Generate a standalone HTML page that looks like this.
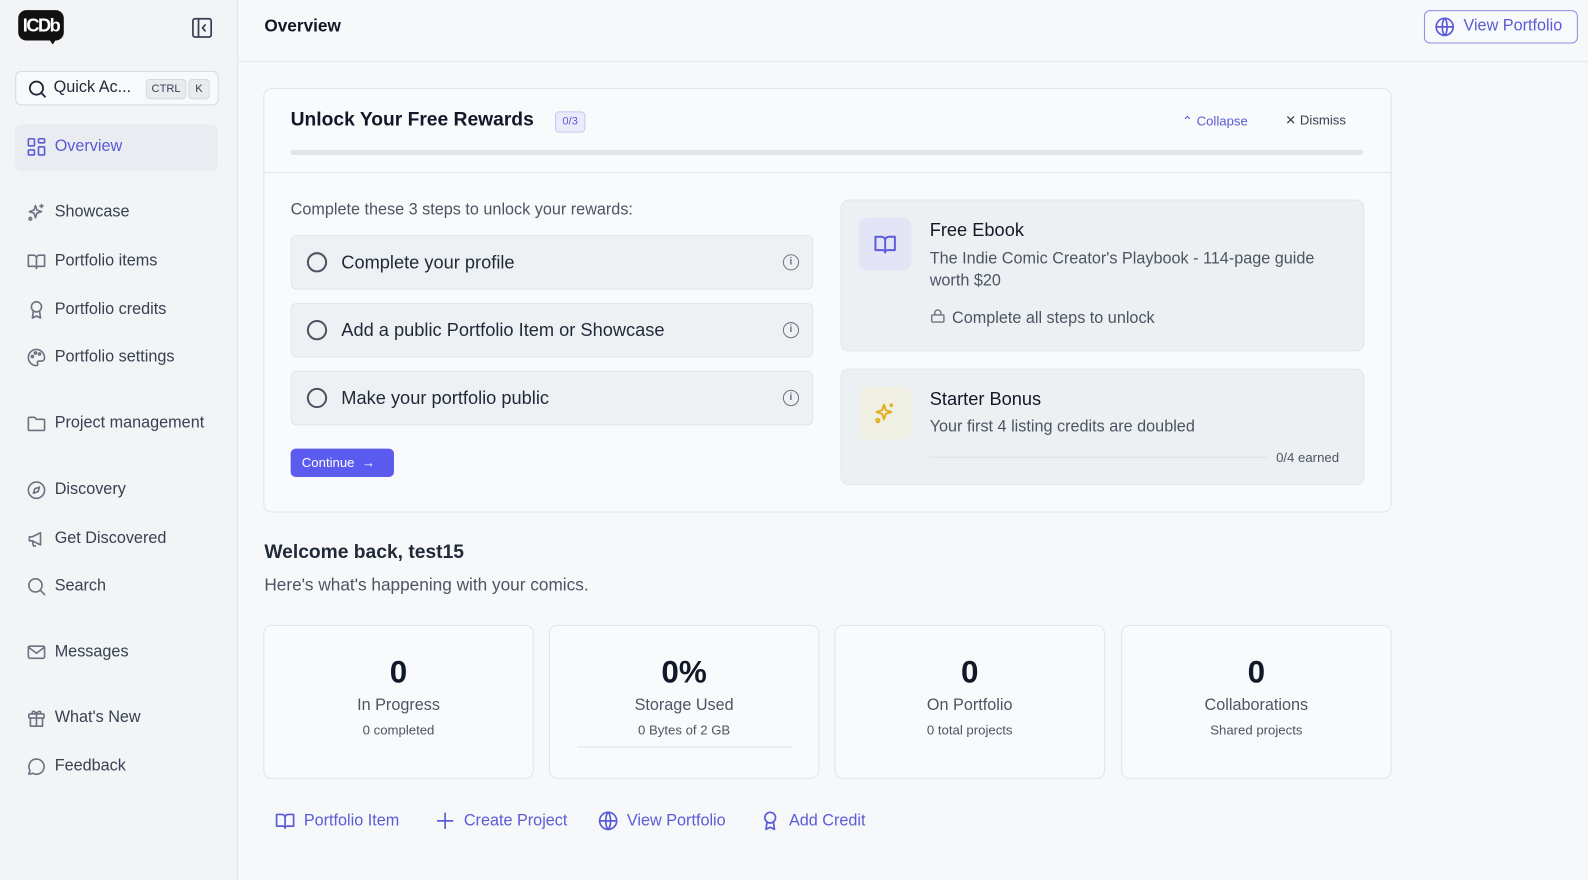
<!DOCTYPE html>
<html><head><meta charset="utf-8"><style>
*{box-sizing:border-box;margin:0;padding:0}
html,body{width:1588px;height:869px;overflow:hidden;background:#f6f8fa}
#w{position:absolute;left:0;top:0;width:1568px;height:858px;transform:scale(1.01276);transform-origin:0 0;font-family:"Liberation Sans",sans-serif;color:#1f2937}
.abs{position:absolute}
.side{left:0;top:0;width:235px;height:869px;border-right:1px solid #e3e6ea;background:#f2f4f6}
.nav{position:absolute;left:26px;display:flex;align-items:center;gap:8px;font-size:16px;color:#374151;height:20px}
.nav svg{width:20px;height:20px;fill:none;stroke:#6b7280;stroke-width:1.6;stroke-linecap:round;stroke-linejoin:round}
.main{left:235px;top:0;width:1400px;height:869px;background:#f6f8fa}
.step{position:absolute;left:287px;width:516px;height:54px;background:#eef1f4;border:1px solid #e1e5ea;border-radius:6px;display:flex;align-items:center;font-size:18px;color:#1f2937}
.step .c{width:20px;height:20px;border:2px solid #4b5563;border-radius:50%;margin:0 14px 0 15px}
.step .i{position:absolute;right:13px;top:18px;width:16px;height:16px;border:1.5px solid #6b7280;border-radius:50%;font-size:10px;text-align:center;line-height:13px;color:#6b7280;font-weight:bold}
.rc{position:absolute;left:830px;width:517px;background:#edf0f3;border:1px solid #e1e5ea;border-radius:8px}
.stat{position:absolute;top:617px;width:267px;height:152px;background:#f9fafb;border:1px solid #e1e5ea;border-radius:8px;text-align:center}
.stat .n{margin-top:28px;font-size:31px;font-weight:bold;color:#111827}
.stat .l{margin-top:6px;font-size:16px;color:#4b5563}
.stat .s{margin-top:7px;font-size:13px;color:#4b5563}
.lnk{position:absolute;top:800px;display:flex;align-items:center;gap:8px;color:#5b5bd6;font-size:16px}
.lnk svg{width:21px;height:21px;fill:none;stroke:#5b5bd6;stroke-width:1.6;stroke-linecap:round;stroke-linejoin:round}
</style></head><body><div id="w">
<div class="abs side"></div>
<div class="abs" style="left:18px;top:10px;width:45px;height:30px;background:#111;border-radius:8px;color:#fff;font-weight:bold;font-size:18px;line-height:30px;text-align:center;letter-spacing:-1.5px">ICDb</div>
<div class="abs" style="left:48px;top:38px;width:0;height:0;border-left:4px solid transparent;border-right:4px solid transparent;border-top:6px solid #111"></div>
<svg class="abs" style="left:189px;top:17px" width="21" height="21" viewBox="0 0 21 21" fill="none" stroke="#374151" stroke-width="1.7"><rect x="1.5" y="1.5" width="18" height="18" rx="2"/><path d="M7 1.5v18M14 7l-3 3.5 3 3.5"/></svg>
<div class="abs" style="left:15px;top:70px;width:201px;height:34px;border:1px solid #d5d9de;border-radius:6px;background:#f7f9fa"></div>
<svg class="abs" style="left:27px;top:78px" width="20" height="20" viewBox="0 0 20 20" fill="none" stroke="#1f2937" stroke-width="1.8"><circle cx="9" cy="9" r="6.5"/><path d="M14 14l4 4"/></svg>
<div class="abs" style="left:53px;top:78px;font-size:16px;color:#1f2937">Quick Ac...</div>
<div class="abs" style="left:144px;top:78px;width:40px;height:20px;border:1px solid #d5d9de;border-radius:4px;background:#e9ecef;font-size:11px;text-align:center;line-height:18px;color:#374151">CTRL</div>
<div class="abs" style="left:186px;top:78px;width:21px;height:20px;border:1px solid #d5d9de;border-radius:4px;background:#e9ecef;font-size:11px;text-align:center;line-height:18px;color:#374151">K</div>
<div class="abs" style="left:15px;top:123px;width:200px;height:46px;background:#e9ecf0;border-radius:6px"></div>
<div class="nav" style="top:135px;color:#5b5bd6"><svg viewBox="0 0 20 20" style="stroke:#5b5bd6"><rect x="2" y="2" width="6" height="7" rx="1"/><rect x="12" y="2" width="6" height="4" rx="1"/><rect x="12" y="10" width="6" height="8" rx="1"/><rect x="2" y="13" width="6" height="5" rx="1"/></svg>Overview</div>
<div class="nav" style="top:200px"><svg viewBox="0 0 20 20"><path d="M9 3l1.5 4.5L15 9l-4.5 1.5L9 15l-1.5-4.5L3 9l4.5-1.5z"/><path d="M15 2v3M13.5 3.5h3"/><circle cx="4" cy="16" r="1.3"/></svg>Showcase</div>
<div class="nav" style="top:248px"><svg viewBox="0 0 20 20"><path d="M2 4h5a3 3 0 013 3v10a2 2 0 00-2-2H2zM18 4h-5a3 3 0 00-3 3v10a2 2 0 012-2h6z"/></svg>Portfolio items</div>
<div class="nav" style="top:296px"><svg viewBox="0 0 20 20"><circle cx="10" cy="7" r="5"/><path d="M7 11l-1 7 4-2 4 2-1-7"/></svg>Portfolio credits</div>
<div class="nav" style="top:343px"><svg viewBox="0 0 20 20"><path d="M10 2a8 8 0 000 16c1.5 0 1.5-1.5 1-2.5s0-2 1.5-2H15a3 3 0 003-3c0-4.5-3.5-8.5-8-8.5z"/><circle cx="6" cy="9" r="1"/><circle cx="9" cy="5.5" r="1"/><circle cx="13" cy="6.5" r="1"/></svg>Portfolio settings</div>
<div class="nav" style="top:408px"><svg viewBox="0 0 20 20"><path d="M2 5a1 1 0 011-1h5l2 2h7a1 1 0 011 1v9a1 1 0 01-1 1H3a1 1 0 01-1-1z"/></svg>Project management</div>
<div class="nav" style="top:474px"><svg viewBox="0 0 20 20"><circle cx="10" cy="10" r="8"/><path d="M13 7l-1.5 4.5L7 13l1.5-4.5z"/></svg>Discovery</div>
<div class="nav" style="top:522px"><svg viewBox="0 0 20 20"><path d="M3 8v4h3l8 4V4L6 8zM6 12l1 5h2"/></svg>Get Discovered</div>
<div class="nav" style="top:569px"><svg viewBox="0 0 20 20"><circle cx="9" cy="9" r="6.5"/><path d="M14 14l4 4"/></svg>Search</div>
<div class="nav" style="top:634px"><svg viewBox="0 0 20 20"><rect x="2" y="4" width="16" height="12" rx="1.5"/><path d="M2 5l8 6 8-6"/></svg>Messages</div>
<div class="nav" style="top:699px"><svg viewBox="0 0 20 20"><rect x="2.5" y="6" width="15" height="4" rx="1"/><path d="M4 10v8h12v-8M10 6v12M10 6C8 2 5 3 6 5.5M10 6c2-4 5-3 4-0.5"/></svg>What's New</div>
<div class="nav" style="top:747px"><svg viewBox="0 0 20 20"><path d="M10 2.5a7.5 7.5 0 00-6.5 11.2L2.5 17.5l3.8-1A7.5 7.5 0 1010 2.5z"/></svg>Feedback</div>

<div class="abs main"></div>
<div class="abs" style="left:235px;top:60px;width:1400px;border-top:1px solid #e3e6ea"></div>
<div class="abs" style="left:261px;top:16px;font-size:17px;font-weight:bold;color:#111827">Overview</div>
<div class="abs" style="left:1406px;top:10px;width:152px;height:33px;border:1px solid #8b8be8;border-radius:6px;background:#f8f9fb"></div>
<svg class="abs" style="left:1416px;top:16px" width="21" height="21" viewBox="0 0 20 20" fill="none" stroke="#5b5bd6" stroke-width="1.6"><circle cx="10" cy="10" r="8"/><path d="M2 10h16M10 2c-3 3-3 13 0 16M10 2c3 3 3 13 0 16"/></svg>
<div class="abs" style="left:1445px;top:17px;font-size:16px;color:#5b5bd6">View Portfolio</div>

<div class="abs" style="left:260px;top:87px;width:1114px;height:419px;background:#f8fafb;border:1px solid #e1e5ea;border-radius:8px"></div>
<div class="abs" style="left:287px;top:108px;font-size:19px;font-weight:bold;color:#111827">Unlock Your Free Rewards</div>
<div class="abs" style="left:548px;top:110px;width:30px;height:21px;background:#ebebfb;border:1px solid #c7c7f0;border-radius:4px;font-size:11px;color:#5b5bd6;text-align:center;line-height:19px">0/3</div>
<div class="abs" style="left:1167px;top:112px;font-size:13px;color:#5b5bd6">⌃ Collapse</div>
<div class="abs" style="left:1269px;top:111px;font-size:13px;color:#374151">✕ Dismiss</div>
<div class="abs" style="left:287px;top:148px;width:1059px;height:5px;background:#e1e5ea;border-radius:3px"></div>
<div class="abs" style="left:261px;top:170px;width:1112px;border-top:1px solid #e3e6ea"></div>
<div class="abs" style="left:287px;top:199px;font-size:16px;color:#4b5563">Complete these 3 steps to unlock your rewards:</div>
<div class="step" style="top:232px"><div class="c"></div>Complete your profile<div class="i">i</div></div>
<div class="step" style="top:299px"><div class="c"></div>Add a public Portfolio Item or Showcase<div class="i">i</div></div>
<div class="step" style="top:366px"><div class="c"></div>Make your portfolio public<div class="i">i</div></div>
<div class="abs" style="left:287px;top:443px;width:102px;height:28px;background:#5b5bf0;border-radius:5px;color:#fff;font-size:13px;line-height:28px;padding-left:11px">Continue &nbsp;→</div>

<div class="rc" style="top:197px;height:150px"></div>
<div class="abs" style="left:848px;top:215px;width:52px;height:52px;background:#e3e5f6;border-radius:8px"></div>
<svg class="abs" style="left:862px;top:229px" width="24" height="24" viewBox="0 0 20 20" fill="none" stroke="#5b5bd6" stroke-width="1.6" stroke-linejoin="round"><path d="M2 4h5a3 3 0 013 3v10a2 2 0 00-2-2H2zM18 4h-5a3 3 0 00-3 3v10a2 2 0 012-2h6z"/></svg>
<div class="abs" style="left:918px;top:217px;font-size:18px;color:#111827">Free Ebook</div>
<div class="abs" style="left:918px;top:245px;width:410px;font-size:16px;line-height:22px;color:#4b5563">The Indie Comic Creator's Playbook - 114-page guide worth $20</div>
<svg class="abs" style="left:918px;top:304px" width="16" height="16" viewBox="0 0 16 16" fill="none" stroke="#6b7280" stroke-width="1.4"><rect x="2" y="7" width="12" height="7" rx="1"/><path d="M5 7V5a3 3 0 016 0v2"/></svg>
<div class="abs" style="left:940px;top:306px;font-size:16px;color:#4b5563">Complete all steps to unlock</div>

<div class="rc" style="top:364px;height:115px"></div>
<div class="abs" style="left:848px;top:382px;width:52px;height:52px;background:#efefe4;border-radius:8px"></div>
<svg class="abs" style="left:862px;top:396px" width="24" height="24" viewBox="0 0 20 20" fill="none" stroke="#e0b020" stroke-width="1.7" stroke-linejoin="round"><path d="M9 3l1.5 4.5L15 9l-4.5 1.5L9 15l-1.5-4.5L3 9l4.5-1.5z"/><path d="M15 2v3M13.5 3.5h3"/><circle cx="4" cy="16" r="1.3"/></svg>
<div class="abs" style="left:918px;top:384px;font-size:18px;color:#111827">Starter Bonus</div>
<div class="abs" style="left:918px;top:413px;font-size:16px;color:#4b5563">Your first 4 listing credits are doubled</div>
<div class="abs" style="left:918px;top:451px;width:334px;border-top:1.5px solid #dde1e6"></div>
<div class="abs" style="left:1260px;top:444px;font-size:13px;color:#4b5563">0/4 earned</div>

<div class="abs" style="left:261px;top:535px;font-size:19px;font-weight:bold;color:#1f2937">Welcome back, test15</div>
<div class="abs" style="left:261px;top:568px;font-size:17px;color:#4b5563">Here's what's happening with your comics.</div>

<div class="stat" style="left:260px"><div class="n">0</div><div class="l">In Progress</div><div class="s">0 completed</div></div>
<div class="stat" style="left:542px"><div class="n">0%</div><div class="l">Storage Used</div><div class="s">0 Bytes of 2 GB</div><div style="margin:9px auto 0;width:212px;border-top:1.5px solid #dde1e6"></div></div>
<div class="stat" style="left:824px"><div class="n">0</div><div class="l">On Portfolio</div><div class="s">0 total projects</div></div>
<div class="stat" style="left:1107px"><div class="n">0</div><div class="l">Collaborations</div><div class="s">Shared projects</div></div>

<div class="lnk" style="left:271px"><svg viewBox="0 0 20 20"><path d="M2 4h5a3 3 0 013 3v10a2 2 0 00-2-2H2zM18 4h-5a3 3 0 00-3 3v10a2 2 0 012-2h6z"/></svg>Portfolio Item</div>
<div class="lnk" style="left:429px"><svg viewBox="0 0 20 20"><path d="M10 3v14M3 10h14"/></svg>Create Project</div>
<div class="lnk" style="left:590px"><svg viewBox="0 0 20 20"><circle cx="10" cy="10" r="8"/><path d="M2 10h16M10 2c-3 3-3 13 0 16M10 2c3 3 3 13 0 16"/></svg>View Portfolio</div>
<div class="lnk" style="left:750px"><svg viewBox="0 0 20 20"><circle cx="10" cy="7" r="5"/><path d="M7 11l-1 7 4-2 4 2-1-7"/></svg>Add Credit</div>
</div></body></html>
